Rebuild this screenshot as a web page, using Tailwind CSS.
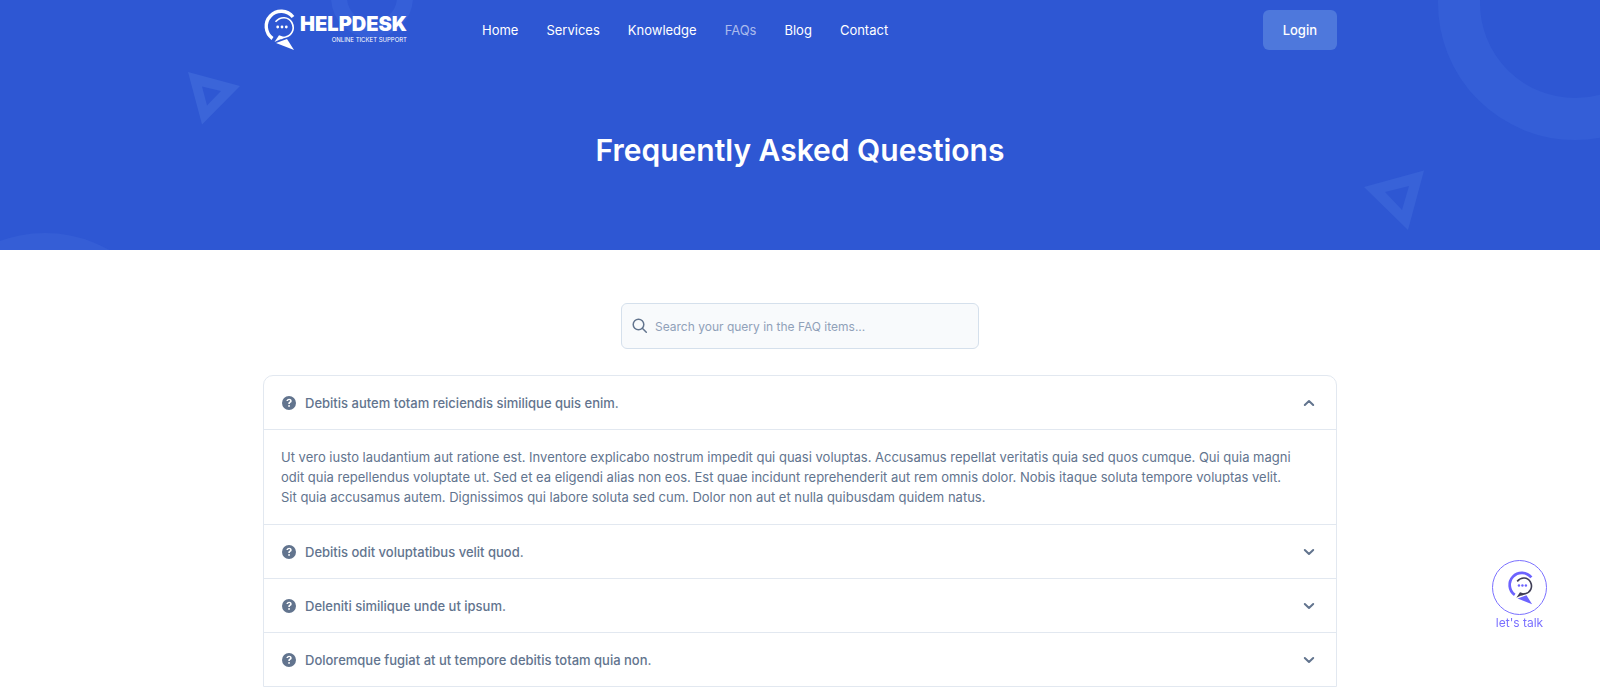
<!DOCTYPE html>
<html lang="en">
  <head>
    <meta charset="utf-8" />
    <meta name="viewport" content="width=device-width, initial-scale=1" />
    <title>FAQs - Helpdesk</title>
    <script src="https://cdn.jsdelivr.net/npm/@tailwindcss/browser@4"></script>
  </head>
  <body class="min-h-screen bg-white font-['Inter',sans-serif] text-[13px] leading-5 text-slate-500">
    <!-- icons used more than once -->
    <svg class="hidden">
      <symbol id="question" viewBox="0 0 16 16">
        <path
          fill="currentColor"
          fill-rule="evenodd"
          d="M8 1a7 7 0 1 0 0 14A7 7 0 0 0 8 1ZM7.1 10.9a.95.95 0 1 1 1.9 0 .95.95 0 0 1-1.9 0ZM5.4 6.1C5.5 4.6 6.6 3.7 8.1 3.7c1.5 0 2.6.9 2.6 2.2 0 .9-.5 1.5-1.1 1.9-.6.4-.7.5-.7 1v.3H7.3v-.5c0-1 .4-1.5 1.1-1.9.5-.3.7-.5.7-.9s-.4-.7-1-.7-1 .3-1.1 1H5.4Z"
        />
      </symbol>
      <symbol id="chevron" viewBox="0 0 12 12">
        <path
          d="M1.8 4 6 8l4.2-4"
          fill="none"
          stroke="currentColor"
          stroke-width="2"
          stroke-linecap="round"
          stroke-linejoin="round"
        />
      </symbol>
    </svg>

    <header class="relative overflow-hidden bg-[#2e57d3] text-white">
      <svg
        class="absolute inset-y-0 left-0 h-[250px] w-[480px]"
        viewBox="0 0 480 250"
        fill="none"
        aria-hidden="true"
      >
        <circle cx="372" cy="-3" r="33" stroke="#355fd8" stroke-width="16" />
        <circle cx="45" cy="363" r="130" fill="#355ed6" />
        <path
          fill="#3b65d9"
          fill-rule="evenodd"
          d="M188 72 240 86 202 124.500ZM202 86.500 207 105.500 221 91Z"
        />
      </svg>
      <svg
        class="absolute inset-y-0 right-0 h-[250px] w-[360px]"
        viewBox="1240 0 360 250"
        fill="none"
        aria-hidden="true"
      >
        <circle cx="1575" cy="3" r="116" stroke="#345ed7" stroke-width="42" />
        <path
          fill="#3862d8"
          fill-rule="evenodd"
          d="M1364 187 1424 170.500 1408 230ZM1385 192 1402 210 1409 186Z"
        />
      </svg>

      <div class="relative mx-auto flex h-[60px] max-w-[1074px] items-center">
        <a href="#" class="flex w-36 items-center justify-between" aria-label="Helpdesk">
          <svg class="h-[42px] w-8 shrink-0" viewBox="0 0 32 42" fill="none">
            <path d="M30 8A15 15 0 1 0 9.500 29.500" stroke="#fff" stroke-width="3.400" />
            <path
              d="M12.500 12.800C17.500 7 25.500 7.500 28.800 13.500c3.500 6.500 0 13-6.300 14.500-2 .4-3.500.9-5 1.800"
              stroke="#fff"
              stroke-width="1.600"
            />
            <path d="M11.500 33 16 26.200 22 28.200Z" fill="#fff" />
            <path d="M13 34 24 30 31 41Z" fill="#fff" />
            <circle cx="14.700" cy="18" r="1.400" fill="#fff" />
            <circle cx="19" cy="18" r="1.400" fill="#fff" />
            <circle cx="23.300" cy="18" r="1.400" fill="#fff" />
          </svg>
          <span class="flex flex-col items-end">
            <span class="text-xl leading-5 font-black">HELPDESK</span>
            <span class="text-[6px] leading-3 whitespace-nowrap">ONLINE TICKET SUPPORT</span>
          </span>
        </a>
        <nav class="ml-[75px] flex gap-7">
          <a href="#" class="hover:text-white/60">Home</a>
          <a href="#" class="hover:text-white/60">Services</a>
          <a href="#" class="hover:text-white/60">Knowledge</a>
          <a href="#" class="text-white/60" aria-current="page">FAQs</a>
          <a href="#" class="hover:text-white/60">Blog</a>
          <a href="#" class="hover:text-white/60">Contact</a>
        </nav>
        <a
          href="#"
          class="ml-auto rounded-md bg-[#4e78dc] px-5 py-[10px] font-medium hover:bg-[#5d85e2]"
          >Login</a
        >
      </div>
      <h1 class="relative pt-[70px] pb-20 text-center text-3xl leading-10 font-semibold">
        Frequently Asked Questions
      </h1>
    </header>

    <main class="mx-auto max-w-[1074px] pt-[53px]">
      <div class="relative mx-auto w-[358px]">
        <svg
          class="absolute top-[15px] left-[11px] size-4 text-slate-500"
          viewBox="0 0 16 16"
          fill="none"
          stroke="currentColor"
          stroke-width="1.500"
          stroke-linecap="round"
        >
          <circle cx="6.500" cy="6.500" r="5.300" />
          <path d="m10.300 10.300 4 4" />
        </svg>
        <input
          type="search"
          aria-label="Search FAQ items"
          placeholder="Search your query in the FAQ items..."
          class="block h-[46px] w-full rounded-md border border-[#d5e0ec] bg-slate-50 pr-3 pl-[33px] text-xs placeholder:text-slate-400 focus:outline-none"
        />
      </div>

      <div class="mt-[26px] rounded-t-[10px] border border-slate-200">
        <button
          type="button"
          class="flex h-[53px] w-full items-center gap-2 px-[17px] text-left font-medium"
          aria-expanded="true"
        >
          <svg class="size-4"><use href="#question" /></svg>
          Debitis autem totam reiciendis similique quis enim.
          <svg class="mr-1 ml-auto size-3 rotate-180"><use href="#chevron" /></svg>
        </button>
        <div class="border-y border-slate-200 p-[17px]">
          Ut vero iusto laudantium aut ratione est. Inventore explicabo nostrum impedit qui quasi
          voluptas. Accusamus repellat veritatis quia sed quos cumque. Qui quia magni<br />
          odit quia repellendus voluptate ut. Sed et ea eligendi alias non eos. Est quae incidunt
          reprehenderit aut rem omnis dolor. Nobis itaque soluta tempore voluptas velit.<br />
          Sit quia accusamus autem. Dignissimos qui labore soluta sed cum. Dolor non aut et nulla
          quibusdam quidem natus.
        </div>
        <button
          type="button"
          class="flex h-[54px] w-full items-center gap-2 border-b border-slate-200 px-[17px] text-left font-medium"
          aria-expanded="false"
        >
          <svg class="size-4"><use href="#question" /></svg>
          Debitis odit voluptatibus velit quod.
          <svg class="mr-1 ml-auto size-3"><use href="#chevron" /></svg>
        </button>
        <button
          type="button"
          class="flex h-[54px] w-full items-center gap-2 border-b border-slate-200 px-[17px] text-left font-medium"
          aria-expanded="false"
        >
          <svg class="size-4"><use href="#question" /></svg>
          Deleniti similique unde ut ipsum.
          <svg class="mr-1 ml-auto size-3"><use href="#chevron" /></svg>
        </button>
        <button
          type="button"
          class="flex h-[53px] w-full items-center gap-2 px-[17px] text-left font-medium"
          aria-expanded="false"
        >
          <svg class="size-4"><use href="#question" /></svg>
          Doloremque fugiat at ut tempore debitis totam quia non.
          <svg class="mr-1 ml-auto size-3"><use href="#chevron" /></svg>
        </button>
      </div>
    </main>

    <button
      type="button"
      class="fixed right-[53px] bottom-[57px] flex flex-col items-center text-xs text-[#7a70ff]"
    >
      <span class="flex size-[55px] items-center justify-center rounded-full border border-[#7a70ff] bg-white">
        <svg class="h-[34px] w-[26px]" viewBox="0 0 32 42" fill="none">
          <path d="M30 8A15 15 0 1 0 9.500 29.500" stroke="#6c63ff" stroke-width="3.400" />
          <path
            d="M12.500 12.800C17.500 7 25.500 7.500 28.800 13.500c3.500 6.500 0 13-6.300 14.500-2 .4-3.500.9-5 1.800"
            stroke="#3f3d56"
            stroke-width="2"
          />
          <path d="M11.500 33 16 26.200 22 28.200Z" fill="#3f3d56" />
          <path d="M13 34 24 30 31 41Z" fill="#6c63ff" />
          <circle cx="14.700" cy="18" r="1.500" fill="#6c63ff" />
          <circle cx="19" cy="18" r="1.500" fill="#6c63ff" />
          <circle cx="23.300" cy="18" r="1.500" fill="#6c63ff" />
        </svg>
      </span>
      let's talk
    </button>
  </body>
</html>
